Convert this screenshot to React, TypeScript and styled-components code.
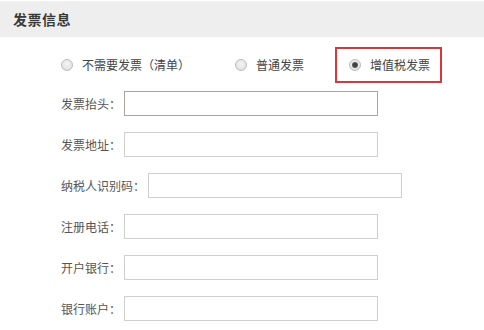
import React from 'react';
import { styled, createGlobalStyle } from 'styled-components';

const GlobalStyle = createGlobalStyle`
    html, body {
        margin: 0;
        padding: 0;
        background: #fff;
        font-family: "Noto Sans CJK SC", "Liberation Sans", sans-serif;
    }
`

const options = [
    { text: '不需要发票（清单）', checked: false },
    { text: '普通发票', checked: false },
    { text: '增值税发票', checked: true },
]

const fields = [
    { label: '发票抬头：', dark: true },
    { label: '发票地址：' },
    { label: '纳税人识别码：' },
    { label: '注册电话：' },
    { label: '开户银行：' },
    { label: '银行账户：' },
]

function App() {
    return (
        <Wrap>
            <GlobalStyle />
            <Header>
                <h2>发票信息</h2>
            </Header>
            <RadioRow>
                {options.map((o, i) => (
                    <Option key={i} $checked={o.checked} $index={i}>
                        <Radio $checked={o.checked} />
                        <span>{o.text}</span>
                    </Option>
                ))}
            </RadioRow>
            <Form>
                {fields.map((f, i) => (
                    <FieldRow key={i}>
                        <Label>{f.label}</Label>
                        <Input type="text" $dark={f.dark} />
                    </FieldRow>
                ))}
            </Form>
        </Wrap>
    )
}

export default App

const Wrap = styled.div`
    width: 484px;
    height: 330px;
    overflow: hidden;
    padding-top: 1px;
    box-sizing: border-box;
    background: #fff;
`
const Header = styled.div`
    height: 36px;
    background-color: #eeeeee;
    display: flex;
    align-items: center;
    padding-left: 13px;
    h2{
        margin: 0;
        font-size: 14px;
        font-weight: bold;
        color: #3a3a3a;
        letter-spacing: 0.5px;
    }
`
const RadioRow = styled.div`
    display: flex;
    align-items: center;
    height: 36px;
    margin-top: 10px;
    padding-left: 61px;
`
const Option = styled.label<{ $checked?: boolean; $index: number }>`
    display: flex;
    align-items: center;
    height: 36px;
    box-sizing: border-box;
    font-size: 12px;
    color: #444;
    margin-left: ${p => (p.$index === 1 ? '45px' : p.$index === 2 ? '31px' : '0')};
    padding: ${p => (p.$checked ? '0 10px 0 12px' : '0')};
    border: ${p => (p.$checked ? '2px solid #d6393c' : 'none')};
    span{
        line-height: 1;
        margin-left: 9px;
    }
`
const Radio = styled.i<{ $checked?: boolean }>`
    display: inline-block;
    position: relative;
    width: 12px;
    height: 12px;
    box-sizing: border-box;
    border-radius: 50%;
    border: 1px solid #bdbdbd;
    background: radial-gradient(circle at 50% 40%, #f4f4f4 0%, #dcdcdc 100%);
    &::after{
        content: '';
        display: ${p => (p.$checked ? 'block' : 'none')};
        position: absolute;
        left: 2px;
        top: 2px;
        width: 6px;
        height: 6px;
        border-radius: 50%;
        background: radial-gradient(circle, #333 0%, #555 60%, #888 100%);
    }
`
const Form = styled.div`
    display: flex;
    flex-direction: column;
    gap: 16px;
    margin-top: 8px;
    padding-left: 61px;
`
const FieldRow = styled.div`
    display: flex;
    align-items: center;
    height: 25px;
`
const Label = styled.span`
    font-size: 12px;
    color: #555;
    margin-right: 3px;
`
const Input = styled.input<{ $dark?: boolean }>`
    width: 254px;
    height: 25px;
    box-sizing: border-box;
    border: 1px solid ${p => (p.$dark ? '#a5a5a5' : '#cfcfcf')};
    background: #fff;
    padding: 0 4px;
    outline: none;
`
